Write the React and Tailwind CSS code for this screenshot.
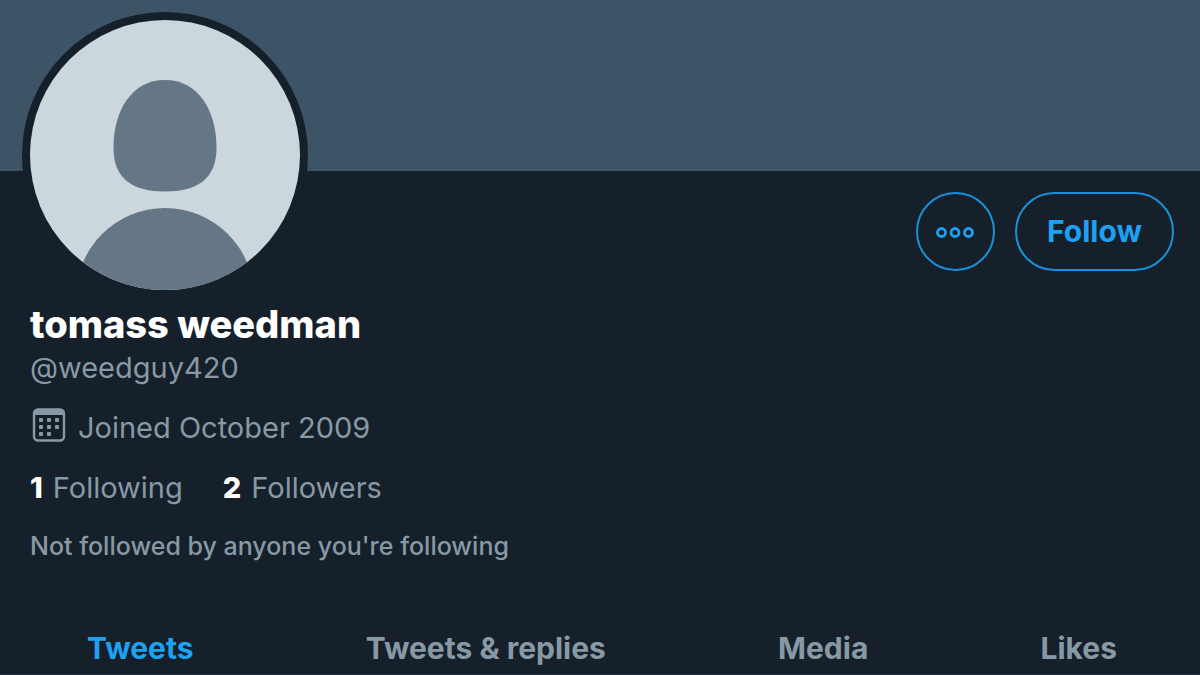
import React, { useState } from 'react';

const TABS = ["Tweets", "Tweets & replies", "Media", "Likes"];

// DEFAULT PROFILE PICTURE
const DefaultAvatar = () => (
  <svg viewBox="0 0 270 270" className="block w-full h-full" role="img" aria-label="Profile picture">
    <clipPath id="avatar-clip">
      <circle cx="135" cy="135" r="135" />
    </clipPath>
    <g clipPath="url(#avatar-clip)">
      <rect width="270" height="270" fill="#ccd6dd" />
      <path
        d="M135 60 C168 60 186.500 90 186.500 128 C186.500 159 167 171.500 135 171.500 C103 171.500 83.500 159 83.500 128 C83.500 90 102 60 135 60 Z"
        fill="#657786"
      />
      <circle cx="135" cy="277" r="89" fill="#657786" />
    </g>
  </svg>
);

const MoreIcon = () => (
  <svg viewBox="0 0 40 14" className="w-10 h-3.5" fill="none" stroke="#1da1f2" strokeWidth="2.8" aria-hidden="true">
    <circle cx="5.500" cy="7.500" r="4" />
    <circle cx="19" cy="7.500" r="4" />
    <circle cx="32.500" cy="7.500" r="4" />
  </svg>
);

const CalendarIcon = () => (
  <svg viewBox="-2 0 36 34" className="w-9 h-[34px]" fill="#8899a6" aria-hidden="true">
    <rect x="2" y="1.500" width="30" height="31" rx="4" fill="none" stroke="#8899a6" strokeWidth="2.400" />
    <path d="M1 6 a5 5 0 0 1 5 -5 h22 a5 5 0 0 1 5 5 v1 h-32 z" />
    <rect x="7" y="10" width="4" height="4" rx="1" />
    <rect x="15" y="10" width="4" height="4" rx="1" />
    <rect x="23" y="10" width="4" height="4" rx="1" />
    <rect x="7" y="17" width="4" height="4" rx="1" />
    <rect x="15" y="17" width="4" height="4" rx="1" />
    <rect x="23" y="17" width="4" height="4" rx="1" />
    <rect x="7" y="24" width="4" height="4" rx="1" />
    <rect x="15" y="24" width="4" height="4" rx="1" />
  </svg>
);

const App = () => {
  const [activeTab, setActiveTab] = useState("Tweets");
  const [following, setFollowing] = useState(false);

  return (
    <div className="min-h-screen bg-[#16202a] text-[#8899a6] font-['Inter','Liberation_Sans',sans-serif]">
      {/* Banner */}
      <div className="h-[171px] bg-[#3d5466]"></div>

      <main>
        <div className="px-[22px] flex justify-between items-end">
          <div className="-mt-[159px] w-[286px] h-[286px] rounded-full border-8 border-[#16202a] bg-[#16202a]">
            <DefaultAvatar />
          </div>
          <div className="flex gap-5 self-start pt-[21px] pr-1">
            <button
              type="button"
              aria-label="More"
              className="w-[79px] h-[79px] rounded-full border-2 border-[#1b8fd8] flex items-center justify-center"
            >
              <MoreIcon />
            </button>
            <button
              type="button"
              onClick={() => setFollowing(!following)}
              className="h-[79px] px-[30px] rounded-full border-2 border-[#1b8fd8] text-[#1da1f2] text-[30px] font-bold"
            >
              {following ? "Following" : "Follow"}
            </button>
          </div>
        </div>

        {/* Profile info */}
        <div className="px-[30px] pt-0.5">
          <h1 className="text-white text-[38px] leading-[48px] font-extrabold">tomass weedman</h1>
          <p className="text-[29px] leading-10">@weedguy420</p>

          <p className="mt-5 flex items-start gap-3 text-[29px] leading-10">
            <CalendarIcon />
            Joined October 2009
          </p>

          <div className="mt-5 flex gap-10 text-[29px] leading-10">
            <a href="#following" className="flex gap-2.5">
              <span className="text-white font-extrabold">1</span> Following
            </a>
            <a href="#followers" className="flex gap-2.5">
              <span className="text-white font-extrabold">2</span> Followers
            </a>
          </div>

          <p className="mt-5 text-[25px] leading-9 font-medium">Not followed by anyone you're following</p>
        </div>

        {/* Tabs */}
        <nav className="mt-14 pl-[87px] pr-[83px] flex justify-between border-b border-[#253341]">
          {TABS.map((tab) => (
            <button
              key={tab}
              type="button"
              onClick={() => setActiveTab(tab)}
              className={`pt-2 pb-1.5 text-[30px] leading-10 font-bold ${activeTab === tab ? 'text-[#1da1f2]' : 'text-[#8899a6]'}`}
            >
              {tab}
            </button>
          ))}
        </nav>
      </main>
    </div>
  );
};

export default App;
